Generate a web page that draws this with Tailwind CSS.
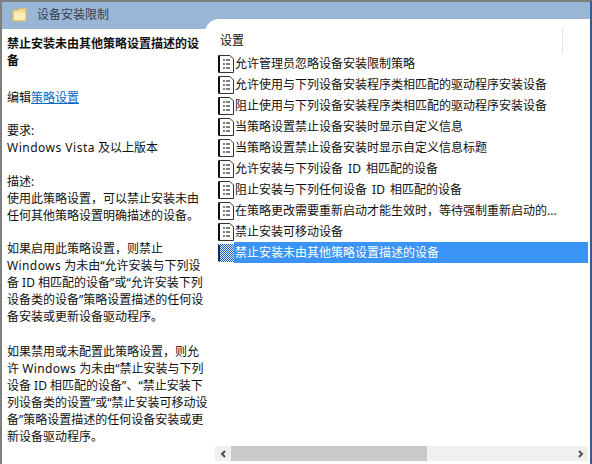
<!DOCTYPE html>
<html lang="zh">
<head>
<meta charset="UTF-8">
<title>设备安装限制</title>
<script src="https://cdn.jsdelivr.net/npm/@tailwindcss/browser@4"></script>
</head>
<body class="bg-white">
<svg class="absolute w-0 h-0">
  <defs>
    <pattern id="dots" width="2" height="2" patternUnits="userSpaceOnUse"><rect width="2" height="2" fill="#dfeaf8"/><rect width="1" height="1" fill="#1f5fb8"/><rect x="1" y="1" width="1" height="1" fill="#1f5fb8"/></pattern>
  </defs>
  <symbol id="doc" viewBox="0 0 16 18">
    <path d="M.5.5H12L15.5 4V17.5H.5Z" fill="#fff" stroke="#333"/>
    <path d="M1 1V17" stroke="#111" stroke-width="2"/>
    <path d="M5 5H7M8 5H12M5 9H7M8 9H12M5 13H7M8 13H12" stroke="#555" stroke-width="1.4"/>
  </symbol>
  <symbol id="docsel" viewBox="0 0 16 18">
    <rect width="16" height="18" fill="url(#dots)"/>
    <path d="M1 1V17" stroke="#0b2a66" stroke-width="2"/>
  </symbol>
</svg>
<div class="w-[592px] h-[464px] overflow-hidden flex flex-col bg-white border-t-2 border-l-2 border-r-2 border-t-[#7f7f7f] border-l-[#7f7f7f] border-r-[#2f5f94] font-['Noto_Sans','Noto_Sans_CJK_SC',sans-serif] text-[12px] text-[#111]">
  <div class="h-[27px] shrink-0 bg-[#9ab6d6] flex items-start pl-[10px] pt-[4px] gap-[10px] text-[#33404f]">
    <svg width="15" height="14" viewBox="0 0 15 14" class="mt-[2px]">
      <path d="M1 2H6L7.5 .5H14V13H1Z" fill="#f4dc8e" stroke="#d9bb62"/>
      <path d="M2 4.5H13V12H2Z" fill="#fbeeb9"/>
    </svg>
    <span class="leading-[18px]">设备安装限制</span>
  </div>
  <div class="flex flex-1 min-h-0">
    <div class="relative z-10 w-[203px] shrink-0 pl-[5px] pt-[6px] leading-[17px] whitespace-nowrap">
      <p class="font-bold">禁止安装未由其他策略设置描述的设<br>备</p>
      <p class="mt-[20px]">编辑<span class="text-[#0b66c3] underline">策略设置</span></p>
      <p class="mt-[16px]">要求:<br><span class="tracking-[0.5px]">Windows Vista</span> 及以上版本</p>
      <p class="mt-[17px]">描述:<br>使用此策略设置，可以禁止安装未由<br>任何其他策略设置明确描述的设备。</p>
      <p class="mt-[16px]">如果启用此策略设置，则禁止<br><span class="tracking-[0.4px]">Windows</span> 为未由“允许安装与下列设<br>备 ID 相匹配的设备”或“允许安装下列<br>设备类的设备”策略设置描述的任何设<br>备安装或更新设备驱动程序。</p>
      <p class="mt-[18px]">如果禁用或未配置此策略设置，则允<br>许 <span class="tracking-[0.4px]">Windows</span> 为未由“禁止安装与下列<br>设备 ID 相匹配的设备”、“禁止安装下<br>列设备类的设置”或“禁止安装可移动设<br>备”策略设置描述的任何设备安装或更<br>新设备驱动程序。</p>
    </div>
    <div class="flex-1 -mt-[10px] bg-white rounded-tl-[14px] pl-[13px] pr-[2px] flex flex-col relative [word-spacing:2px]">
      <div class="absolute right-[27px] top-[10px] h-[25px] w-px bg-[#e4e4e4]"></div>
      <div class="h-[34px] pl-[2px] pt-[13px] leading-[18px] shrink-0">设置</div>
      <div class="flex flex-col leading-[21px]">
        <div class="flex h-[21px] items-center"><svg class="w-[16px] h-[18px] shrink-0"><use href="#doc"/></svg><span class="pl-[1px]">允许管理员忽略设备安装限制策略</span></div>
        <div class="flex h-[21px] items-center"><svg class="w-[16px] h-[18px] shrink-0"><use href="#doc"/></svg><span class="pl-[1px]">允许使用与下列设备安装程序类相匹配的驱动程序安装设备</span></div>
        <div class="flex h-[21px] items-center"><svg class="w-[16px] h-[18px] shrink-0"><use href="#doc"/></svg><span class="pl-[1px]">阻止使用与下列设备安装程序类相匹配的驱动程序安装设备</span></div>
        <div class="flex h-[21px] items-center"><svg class="w-[16px] h-[18px] shrink-0"><use href="#doc"/></svg><span class="pl-[1px]">当策略设置禁止设备安装时显示自定义信息</span></div>
        <div class="flex h-[21px] items-center"><svg class="w-[16px] h-[18px] shrink-0"><use href="#doc"/></svg><span class="pl-[1px]">当策略设置禁止设备安装时显示自定义信息标题</span></div>
        <div class="flex h-[21px] items-center"><svg class="w-[16px] h-[18px] shrink-0"><use href="#doc"/></svg><span class="pl-[1px]">允许安装与下列设备 ID 相匹配的设备</span></div>
        <div class="flex h-[21px] items-center"><svg class="w-[16px] h-[18px] shrink-0"><use href="#doc"/></svg><span class="pl-[1px]">阻止安装与下列任何设备 ID 相匹配的设备</span></div>
        <div class="flex h-[21px] items-center"><svg class="w-[16px] h-[18px] shrink-0"><use href="#doc"/></svg><span class="pl-[1px]">在策略更改需要重新启动才能生效时，等待强制重新启动的...</span></div>
        <div class="flex h-[21px] items-center"><svg class="w-[16px] h-[18px] shrink-0"><use href="#doc"/></svg><span class="pl-[1px]">禁止安装可移动设备</span></div>
        <div class="flex h-[21px] items-center"><svg class="w-[16px] h-[18px] shrink-0"><use href="#docsel"/></svg><span class="pl-[1px] flex-1 bg-[#3a94f5] text-white">禁止安装未由其他策略设置描述的设备</span></div>
      </div>
      <div class="mt-auto mb-[3px] h-[15px] flex items-stretch bg-[#f0f0f0] ml-[-3px]">
        <div class="w-[16px] flex items-center justify-center"><svg width="7" height="8" viewBox="0 0 7 8"><path d="M5 1L2 4L5 7" fill="none" stroke="#505050" stroke-width="2"/></svg></div>
        <div class="w-[196px] bg-[#c9c9c9]"></div>
        <div class="flex-1"></div>
        <div class="w-[16px] flex items-center justify-center"><svg width="7" height="8" viewBox="0 0 7 8"><path d="M2 1L5 4L2 7" fill="none" stroke="#505050" stroke-width="2"/></svg></div>
      </div>
    </div>
  </div>
</div>
</body>
</html>
